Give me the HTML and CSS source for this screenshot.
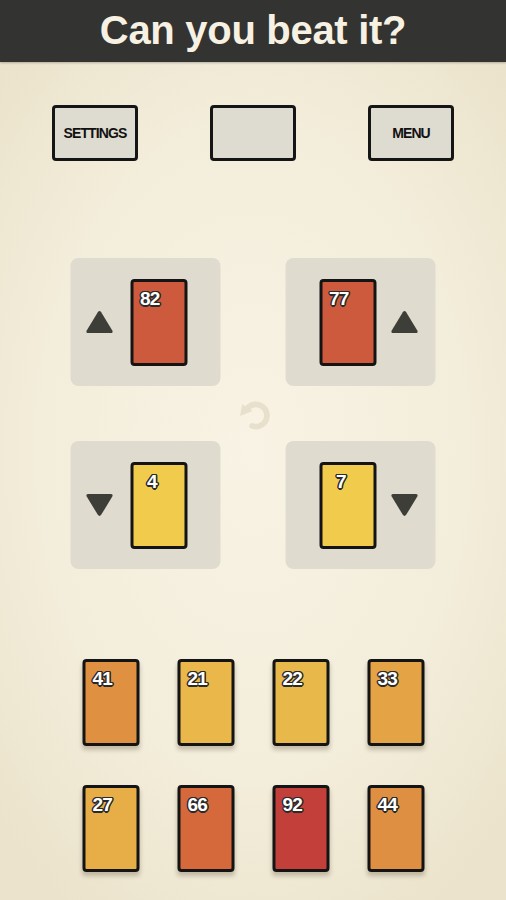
FILE: index.html
```html
<!DOCTYPE html>
<html>
<head>
<meta charset="utf-8">
<link rel="stylesheet" href="styles.css">
</head>
<body>
<header class="topbar"><h1 class="title">Can you beat it?</h1></header>

<div class="buttons">
  <div class="btn">SETTINGS</div>
  <div class="btn"></div>
  <div class="btn">MENU</div>
</div>

<div class="piles">
  <div class="pile-row">
    <div class="pile pile-left">
      <svg class="tri" viewBox="0 0 28 24"><path d="M12.3 2.2 Q14 0 15.7 2.2 L26.8 20.4 Q28 23 25 23 L3 23 Q0 23 1.2 20.4 Z" fill="#3e3e39"/></svg>
      <div class="card c-red"><span class="num">82</span></div>
    </div>
    <div class="pile pile-right">
      <div class="card c-red"><span class="num">77</span></div>
      <svg class="tri" viewBox="0 0 28 24"><path d="M12.3 2.2 Q14 0 15.7 2.2 L26.8 20.4 Q28 23 25 23 L3 23 Q0 23 1.2 20.4 Z" fill="#3e3e39"/></svg>
    </div>
  </div>
  <div class="undo-row">
    <svg class="undo" viewBox="0 0 24 24"><path d="M8.2 7.4 A7 7 0 1 1 10.8 18.9" fill="none" stroke="#e6e0cc" stroke-width="3.6" stroke-linecap="round"/><path d="M3.2 12.6 L4.6 5.2 L11.2 9.4 Z" fill="#e6e0cc"/></svg>
  </div>
  <div class="pile-row">
    <div class="pile pile-left">
      <svg class="tri down" viewBox="0 0 28 24"><path d="M12.3 2.2 Q14 0 15.7 2.2 L26.8 20.4 Q28 23 25 23 L3 23 Q0 23 1.2 20.4 Z" fill="#3e3e39"/></svg>
      <div class="card c-yellow"><span class="num n-center">4</span></div>
    </div>
    <div class="pile pile-right">
      <div class="card c-yellow"><span class="num n-center">7</span></div>
      <svg class="tri down" viewBox="0 0 28 24"><path d="M12.3 2.2 Q14 0 15.7 2.2 L26.8 20.4 Q28 23 25 23 L3 23 Q0 23 1.2 20.4 Z" fill="#3e3e39"/></svg>
    </div>
  </div>
</div>

<div class="hand">
  <div class="card hcard c-41"><span class="num">41</span></div>
  <div class="card hcard c-21"><span class="num">21</span></div>
  <div class="card hcard c-22"><span class="num">22</span></div>
  <div class="card hcard c-33"><span class="num">33</span></div>
  <div class="card hcard c-27"><span class="num">27</span></div>
  <div class="card hcard c-66"><span class="num">66</span></div>
  <div class="card hcard c-92"><span class="num">92</span></div>
  <div class="card hcard c-44"><span class="num">44</span></div>
</div>
</body>
</html>
```

FILE: styles.css
```css
html, body {
  margin: 0;
  padding: 0;
}
body {
  width: 506px;
  height: 900px;
  overflow: hidden;
  font-family: "Liberation Sans", Arial, sans-serif;
  background: radial-gradient(ellipse 70% 60% at 50% 50%, #f8f3e4 0%, #f3eddb 60%, #ebe3cb 100%);
}
.topbar {
  height: 62px;
  background: #333331;
  display: flex;
  align-items: center;
  justify-content: center;
  box-shadow: 0 1px 2px rgba(0,0,0,0.25);
}
.title {
  margin: 0;
  font-size: 40px;
  font-weight: bold;
  color: #f6f1e2;
  letter-spacing: -0.3px;
  line-height: 1;
  transform: translateY(-1px);
}
.buttons {
  margin-top: 43px;
  display: flex;
  justify-content: center;
  gap: 72px;
}
.btn {
  width: 80px;
  height: 50px;
  border: 3px solid #151515;
  border-radius: 4px;
  background: #dedbd0;
  display: flex;
  align-items: center;
  justify-content: center;
  font-size: 14px;
  font-weight: bold;
  letter-spacing: -0.9px;
  color: #111;
}
.piles {
  margin-top: 97px;
  display: flex;
  flex-direction: column;
  align-items: center;
}
.pile-row {
  display: flex;
  gap: 65px;
  transform: translateX(-0.5px);
}
.pile {
  width: 150px;
  height: 128px;
  background: #dfdccf;
  border-radius: 8px;
  display: flex;
  align-items: center;
  box-sizing: border-box;
}
.pile-left {
  padding-left: 15px;
  gap: 17px;
}
.pile-right {
  padding-left: 34px;
  gap: 14px;
}
.tri {
  width: 28px;
  height: 24px;
  flex: none;
}
.tri.down {
  transform: rotate(180deg);
}
.undo-row {
  height: 55px;
  display: flex;
  align-items: center;
  justify-content: center;
}
.undo {
  width: 38px;
  height: 38px;
  transform: translate(1px, 1px);
}
.card {
  position: relative;
  width: 51px;
  height: 81px;
  border: 3px solid #141414;
  border-radius: 4px;
  flex: none;
}
.num {
  position: absolute;
  left: 7px;
  top: 7px;
  font-size: 19px;
  font-weight: bold;
  color: #fff;
  letter-spacing: -0.8px;
  line-height: 1;
  text-shadow:
    -1.5px 0 0 #2a2a2a, 1.5px 0 0 #2a2a2a, 0 -1.5px 0 #2a2a2a, 0 1.5px 0 #2a2a2a,
    -1px -1px 0 #2a2a2a, 1px -1px 0 #2a2a2a, -1px 1px 0 #2a2a2a, 1px 1px 0 #2a2a2a;
}
.n-center {
  left: 14px;
}
.c-red { background: #cd5a3c; }
.c-yellow { background: #f1cb4c; }
.hand {
  margin: 90px auto 0;
  width: 342px;
  display: grid;
  grid-template-columns: repeat(4, 57px);
  column-gap: 38px;
  row-gap: 39px;
  transform: translateX(0.5px);
}
.hcard {
  box-shadow: 0 4px 4px rgba(60, 45, 20, 0.25);
}
.c-41 { background: #df9040; }
.c-21 { background: #e9b74a; }
.c-22 { background: #e9b84a; }
.c-33 { background: #e4a445; }
.c-27 { background: #e7ae47; }
.c-66 { background: #d5693b; }
.c-92 { background: #c3403a; }
.c-44 { background: #df8f41; }
```
